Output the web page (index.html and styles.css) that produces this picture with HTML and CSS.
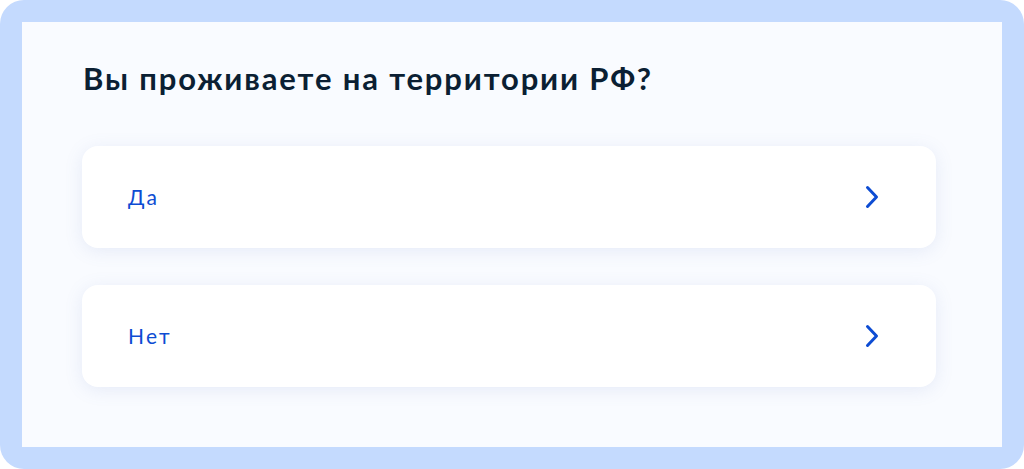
FILE: index.html
```html
<!DOCTYPE html>
<html lang="ru">
<head>
  <meta charset="UTF-8">
  <title>Место проживания</title>
  <link rel="stylesheet" href="styles.css">
</head>
<body>
  <div class="frame">
    <div class="panel">
      <h1 class="question">Вы проживаете на территории РФ?</h1>
      <div class="answers">
        <button class="answer" data-value="yes">
          <span class="answer-label">Да</span>
          <svg class="chevron" width="14" height="24" viewBox="0 0 14 24">
            <path d="M2.5 2.5 L11.5 12 L2.5 21.5" fill="none" stroke="currentColor" stroke-width="3" stroke-linecap="round" stroke-linejoin="round"/>
          </svg>
        </button>
        <button class="answer" data-value="no">
          <span class="answer-label">Нет</span>
          <svg class="chevron" width="14" height="24" viewBox="0 0 14 24">
            <path d="M2.5 2.5 L11.5 12 L2.5 21.5" fill="none" stroke="currentColor" stroke-width="3" stroke-linecap="round" stroke-linejoin="round"/>
          </svg>
        </button>
      </div>
    </div>
  </div>
</body>
</html>
```

FILE: styles.css
```css
html, body {
  margin: 0;
  height: 100%;
  background: #fff;
}

body {
  font-family: Lato, "Noto Sans", sans-serif;
}

.frame {
  box-sizing: border-box;
  height: 469px;
  padding: 22px;
  background: #c4dafe;
  border-radius: 24px;
}

.panel {
  box-sizing: border-box;
  height: 100%;
  padding: 36px 66px 0 60px;
  background: #f9fbff;
}

.question {
  margin: 0 0 0 1px;
  font-size: 31px;
  line-height: 40px;
  font-weight: 700;
  letter-spacing: 1.85px;
  color: #0b1f33;
}

.answers {
  display: flex;
  flex-direction: column;
  gap: 37px;
  margin-top: 48px;
}

.answer {
  display: flex;
  align-items: center;
  justify-content: space-between;
  height: 102px;
  padding: 0 57px 0 46px;
  border: none;
  border-radius: 16px;
  background: #fff;
  box-shadow: 0 3px 18px rgba(102, 126, 190, 0.13);
  color: #0d4cd3;
  font-family: inherit;
  cursor: pointer;
  text-align: left;
}

.answer-label {
  font-size: 21px;
  line-height: 28px;
  letter-spacing: 2.2px;
}

.chevron {
  display: block;
}
```
